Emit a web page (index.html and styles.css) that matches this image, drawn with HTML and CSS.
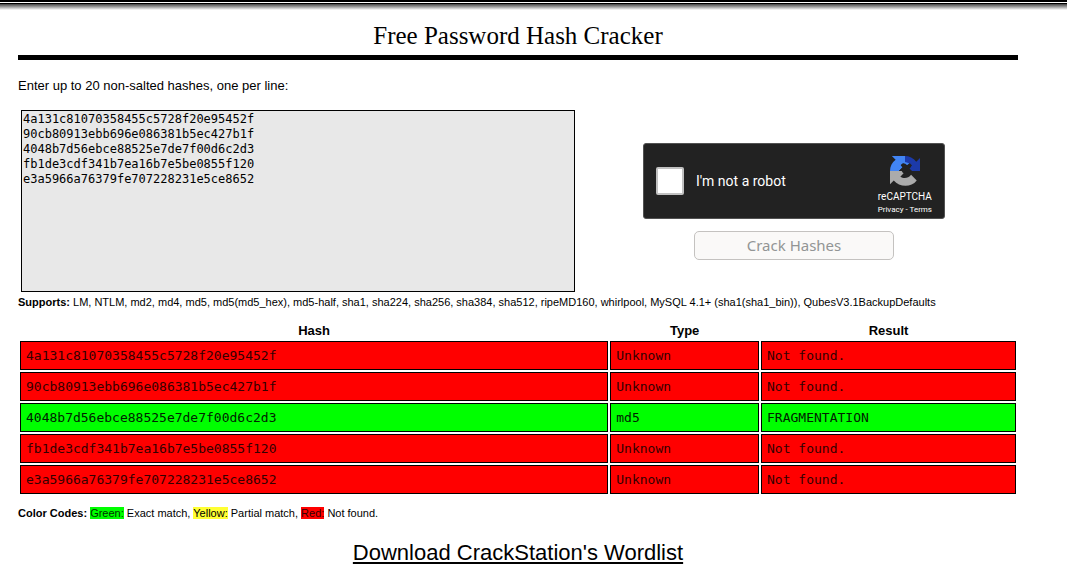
FILE: index.html
```html
<!DOCTYPE html>
<html lang="en">
<head>
<meta charset="utf-8">
<title>Free Password Hash Cracker</title>
<link rel="stylesheet" href="styles.css">
</head>
<body>
<div class="topbar"></div>
<main class="content">
  <h1 class="title">Free Password Hash Cracker</h1>
  <form class="cracker">
    <label class="prompt" for="hashes">Enter up to 20 non-salted hashes, one per line:</label>
    <div class="entry">
      <textarea class="hashes" id="hashes" spellcheck="false">4a131c81070358455c5728f20e95452f
90cb80913ebb696e086381b5ec427b1f
4048b7d56ebce88525e7de7f00d6c2d3
fb1de3cdf341b7ea16b7e5be0855f120
e3a5966a76379fe707228231e5ce8652</textarea>
      <div class="actions">
        <div class="captcha">
          <input class="captcha-box" type="checkbox" id="robot">
          <label class="captcha-label" for="robot">I'm not a robot</label>
          <div class="captcha-brand">
            <svg class="captcha-logo" viewBox="0 0 64 64" aria-hidden="true">
              <path fill="#1c3aa9" d="M64 32V4l-8 8C50 4 41 0 32 0v16c6 0 10 2 13 7l-8 9z"/>
              <path fill="#4285f4" d="M32 0H4l8 8C4 14 0 22 0 32h19l8-8-4-4c2-2 5-4 9-4l6 5 5-5-11-3z"/>
              <path fill="#ababab" d="M0 32v28l8-8c12 15 37 16 49 0L45 40c-6 8-16 9-23 4l7-7-2-5z"/>
              <path fill="#222" d="M19 32l8-8-4-5 5-4 7 6 7-6 5 5-6 6 6 6-6 5-7-5-6 5-3-5z"/>
            </svg>
            <span class="captcha-name">reCAPTCHA</span>
            <span class="captcha-links"><a href="#privacy">Privacy</a> - <a href="#terms">Terms</a></span>
          </div>
        </div>
        <button class="crack" type="submit" disabled>Crack Hashes</button>
      </div>
    </div>
  </form>
  <p class="note"><strong>Supports:</strong> LM, NTLM, md2, md4, md5, md5(md5_hex), md5-half, sha1, sha224, sha256, sha384, sha512, ripeMD160, whirlpool, MySQL 4.1+ (sha1(sha1_bin)), QubesV3.1BackupDefaults</p>
  <table class="results">
    <thead>
      <tr><th class="col-hash">Hash</th><th class="col-type">Type</th><th class="col-result">Result</th></tr>
    </thead>
    <tbody>
      <tr class="miss"><td>4a131c81070358455c5728f20e95452f</td><td>Unknown</td><td>Not found.</td></tr>
      <tr class="miss"><td>90cb80913ebb696e086381b5ec427b1f</td><td>Unknown</td><td>Not found.</td></tr>
      <tr class="hit"><td>4048b7d56ebce88525e7de7f00d6c2d3</td><td>md5</td><td>FRAGMENTATION</td></tr>
      <tr class="miss"><td>fb1de3cdf341b7ea16b7e5be0855f120</td><td>Unknown</td><td>Not found.</td></tr>
      <tr class="miss"><td>e3a5966a76379fe707228231e5ce8652</td><td>Unknown</td><td>Not found.</td></tr>
    </tbody>
  </table>
  <p class="note"><strong>Color Codes:</strong> <span class="code-hit">Green:</span> Exact match, <span class="code-partial">Yellow:</span> Partial match, <span class="code-miss">Red:</span> Not found.</p>
  <p class="download"><a href="#wordlist">Download CrackStation's Wordlist</a></p>
</main>
</body>
</html>
```

FILE: styles.css
```css
* {
  box-sizing: border-box;
}

body {
  margin: 0;
  background: #fff;
  color: #000;
  font: 13px/16px "Liberation Sans", Arial, sans-serif;
}

.topbar {
  height: 10px;
  background: linear-gradient(#000 0 2px, #fff 2px 3px, #000 3px 4px, #444 4px, #fff 10px);
}

.content {
  max-width: 1000px;
  margin: 0 18px;
}

.title {
  margin: 0 0 18px;
  padding: 10px 0 4px;
  border-bottom: 5px solid #000;
  font: 25px/31px "Liberation Serif", "Times New Roman", serif;
  text-align: center;
}

.prompt {
  display: block;
}

.entry {
  display: flex;
  margin: 16px 0 4px;
  padding: 0 5px 0 3px;
}

.hashes {
  flex: 0 0 auto;
  width: 554px;
  height: 182px;
  padding: 1px;
  border: 1px solid #000;
  background: #e8e8e8;
  color: #000;
  font: 12px/15px "DejaVu Sans Mono", monospace;
  resize: none;
}

.actions {
  flex: 1;
  display: flex;
  flex-direction: column;
  align-items: center;
  justify-content: center;
  gap: 12px;
}

.captcha {
  display: flex;
  align-items: center;
  width: 302px;
  height: 76px;
  padding: 0 12px;
  border: 1px solid #525252;
  border-radius: 3px;
  background: #222;
  color: #fff;
  font-family: Roboto, sans-serif;
}

.captcha-box {
  appearance: none;
  width: 28px;
  height: 28px;
  margin: 0 12px 0 0;
  border: 2px solid #c1c1c1;
  border-radius: 2px;
  background: #fff;
}

.captcha-label {
  font-size: 14px;
}

.captcha-brand {
  display: flex;
  flex-direction: column;
  align-items: center;
  margin-left: auto;
  padding-top: 10px;
}

.captcha-logo {
  width: 30px;
  height: 30px;
  margin-bottom: 4px;
}

.captcha-name {
  font-size: 10px;
  line-height: 13px;
}

.captcha-links {
  font-size: 8px;
  line-height: 13px;
}

.captcha-links a {
  color: inherit;
  text-decoration: none;
}

.crack {
  width: 200px;
  height: 29px;
  padding: 0;
  border: 1px solid #c4c2c0;
  border-radius: 5px;
  background: #faf9f8;
  color: #929595;
  font: 15px/20px "Noto Sans", sans-serif;
}

.note {
  margin: 0;
  font-size: 11px;
  line-height: 13px;
}

.results {
  width: 100%;
  margin: 12px 0 11px;
  border-spacing: 2px;
  table-layout: fixed;
}

.results th {
  padding: 0;
  line-height: 16px;
}

.col-hash {
  width: 59.3%;
}

.col-type {
  width: 15%;
}

.col-result {
  width: 25.7%;
}

.results td {
  padding: 5px;
  border: 1px solid #000;
  font: 13px/17px "DejaVu Sans Mono", monospace;
}

.miss td {
  background: #f00;
  color: #300;
}

.hit td {
  background: #0f0;
  color: #020;
}

.code-hit {
  background: #0f0;
  color: #030;
}

.code-partial {
  background: #ff3;
}

.code-miss {
  background: #f00;
  color: #300;
}

.download {
  margin: 20px 0;
  font-size: 22px;
  line-height: 26px;
  text-align: center;
}

.download a {
  color: #000;
}
```
